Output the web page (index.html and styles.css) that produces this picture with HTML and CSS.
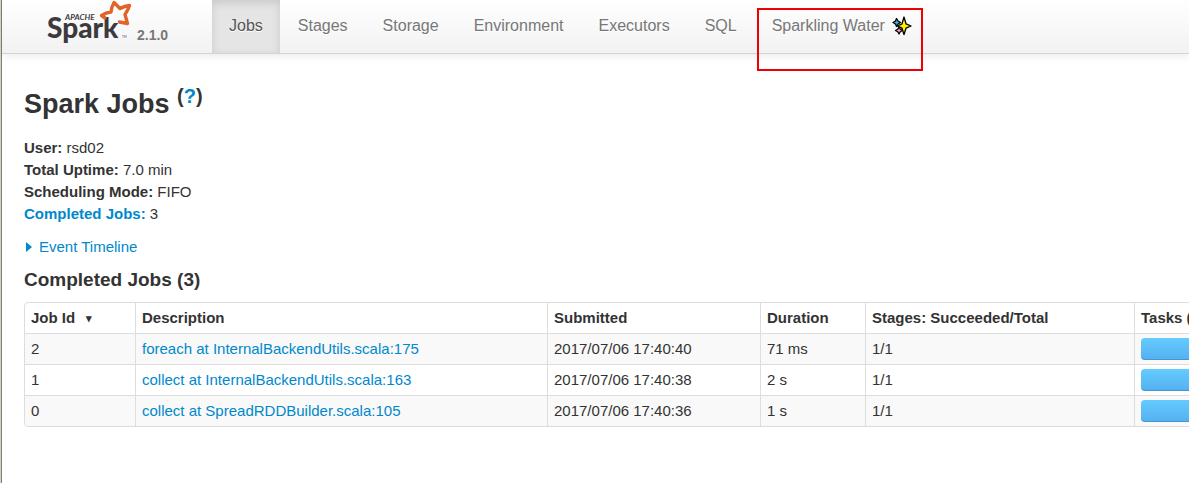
FILE: index.html
```html
<!DOCTYPE html>
<html lang="en">
<head>
<meta charset="utf-8">
<title>Spark Jobs</title>
<link rel="stylesheet" href="styles.css">
</head>
<body>
<header class="navbar">
  <div class="brand">
    <a href="#" class="logo" aria-label="Apache Spark">
      <svg width="86" height="46" viewBox="0 0 86 46">
        <text class="logo-top" x="18" y="20">APACHE</text>
        <text class="logo-name" x="0" y="38">Spark</text>
        <text class="logo-tm" x="75" y="38">TM</text>
        <path d="M58 18L54.500 15.500Q59 12.500 64 12Q64.500 7 67 2.500L73 8.500Q77.500 6 82.500 5.500Q81 10 78 14.500L80.500 23.500L72.500 22" fill="none" stroke="#e2622a" stroke-width="3.400" stroke-linejoin="round" stroke-linecap="round"/>
      </svg>
    </a>
    <span class="version">2.1.0</span>
  </div>
  <nav class="nav">
    <a href="#" class="tab active" aria-current="page">Jobs</a>
    <a href="#" class="tab">Stages</a>
    <a href="#" class="tab">Storage</a>
    <a href="#" class="tab">Environment</a>
    <a href="#" class="tab">Executors</a>
    <a href="#" class="tab">SQL</a>
    <a href="#" class="tab marked">Sparkling Water
      <svg class="sparkles" width="20" height="20" viewBox="0 0 20 20" stroke="#000" stroke-width="1.300" stroke-linejoin="round">
        <path d="M4.500 2.500L6 5L8.500 6.500L6 8L4.500 10.500L3.500 8L1 6.500L3.500 5Z" fill="#35b5e5"/>
        <path d="M7 11L8.300 13.300L10.500 14.500L8.300 15.700L7 18L5.700 15.700L3.500 14.500L5.700 13.300Z" fill="#f4a0c4"/>
        <path d="M12 1L14 7.800L19 10L14 12.200L12 18.500L10 12.200L5.500 10L10 7.800Z" fill="#fff200"/>
      </svg>
    </a>
  </nav>
</header>
<main class="content">
  <h1>Spark Jobs <sup>(<a href="#">?</a>)</sup></h1>
  <ul class="summary">
    <li><strong>User:</strong> rsd02</li>
    <li><strong>Total Uptime:</strong> 7.0 min</li>
    <li><strong>Scheduling Mode:</strong> FIFO</li>
    <li><a href="#completed"><strong>Completed Jobs:</strong></a> 3</li>
  </ul>
  <a href="#" class="timeline"><span class="arrow"></span>Event Timeline</a>
  <h2 id="completed">Completed Jobs (3)</h2>
  <table class="jobs">
    <colgroup><col class="c-id"><col class="c-desc"><col class="c-sub"><col class="c-dur"><col class="c-stages"><col></colgroup>
    <thead>
      <tr><th>Job Id <span class="sort">▾</span></th><th>Description</th><th>Submitted</th><th>Duration</th><th>Stages: Succeeded/Total</th><th>Tasks (for all stages): Succeeded/Total</th></tr>
    </thead>
    <tbody>
      <tr><td>2</td><td><a href="#">foreach at InternalBackendUtils.scala:175</a></td><td>2017/07/06 17:40:40</td><td>71 ms</td><td>1/1</td><td><div class="bar"></div></td></tr>
      <tr><td>1</td><td><a href="#">collect at InternalBackendUtils.scala:163</a></td><td>2017/07/06 17:40:38</td><td>2 s</td><td>1/1</td><td><div class="bar"></div></td></tr>
      <tr><td>0</td><td><a href="#">collect at SpreadRDDBuilder.scala:105</a></td><td>2017/07/06 17:40:36</td><td>1 s</td><td>1/1</td><td><div class="bar"></div></td></tr>
    </tbody>
  </table>
</main>
</body>
</html>
```
FILE: styles.css
```css
* { box-sizing: border-box; }
body {
  margin: 0;
  min-height: 100vh;
  border-left: 1px solid #d4d0c8;
  box-shadow: inset 1px 0 #808078;
  background: #fff;
  color: #333;
  font: 15px/22px "Liberation Sans", Arial, sans-serif;
}
a { color: #0088cc; text-decoration: none; }
.navbar {
  display: flex;
  height: 54px;
  margin-left: 1px;
  border-bottom: 1px solid #d4d4d4;
  background: linear-gradient(#fff, #f2f2f2);
  box-shadow: 0 1px 10px rgba(0, 0, 0, 0.1);
}
.brand {
  display: flex;
  flex: none;
  align-items: flex-start;
  width: 210px;
  padding-left: 45px;
}
.logo svg { display: block; }
.logo text { font-family: Lato, sans-serif; fill: #3c3a3e; }
.logo .logo-name { font-size: 28px; font-weight: 900; }
.logo .logo-top { font-size: 8px; font-weight: 700; font-style: italic; }
.logo .logo-tm { font-size: 3px; }
.version {
  padding: 24px 0 0 4px;
  color: #777;
  font-size: 14px;
  font-weight: 700;
}
.nav { display: flex; flex: none; gap: 1px; }
.tab {
  display: flex;
  align-items: center;
  padding: 0 17px 2px;
  color: #777;
  font-size: 16px;
  text-shadow: 0 1px 0 #fff;
  white-space: nowrap;
}
.active {
  background: #e5e5e5;
  color: #555;
  box-shadow: inset 0 3px 8px rgba(0, 0, 0, 0.125);
}
.marked { position: relative; }
.marked::after {
  content: "";
  position: absolute;
  inset: 8px 6px -18px 2px;
  border: 2px solid #f00000;
}
.sparkles { margin-left: 7px; }
.content { padding: 28px 0 0 23px; overflow: hidden; }
h1 { margin: 0 0 11px; font-size: 27px; line-height: 44px; }
sup { font-size: 20px; line-height: 0; vertical-align: 10px; }
.summary { margin: 0; padding: 0; list-style: none; }
.timeline { display: flex; align-items: center; margin-top: 11px; }
.arrow {
  margin: 0 7px 0 2px;
  border: 5px solid transparent;
  border-left: 6px solid #0088cc;
  border-right: 0;
}
h2 { margin: 11px 0; font-size: 19px; line-height: 22px; }
.jobs {
  width: calc(100% + 24px);
  table-layout: fixed;
  border: 1px solid #ddd;
  border-radius: 4px;
  border-spacing: 0;
}
.c-id { width: 110px; }
.c-desc { width: 412px; }
.c-sub { width: 213px; }
.c-dur { width: 105px; }
.c-stages { width: 269px; }
th, td {
  height: 31px;
  padding: 4px 6px;
  border-top: 1px solid #ddd;
  text-align: left;
  white-space: nowrap;
}
th { height: 30px; border-top: 0; }
th + th, td + td { padding-left: 6px; border-left: 1px solid #ddd; }
tbody tr:nth-child(odd) td { background: #f9f9f9; }
tbody tr:last-child td:first-child { border-bottom-left-radius: 4px; }
.sort { margin-left: 7px; font-size: 11px; line-height: 0; vertical-align: 1px; }
.bar {
  height: 22px;
  border-radius: 4px;
  background: linear-gradient(#64cbff, #54b0f0);
  box-shadow: inset 0 -1px 0 rgba(0, 0, 0, 0.15);
}
```
